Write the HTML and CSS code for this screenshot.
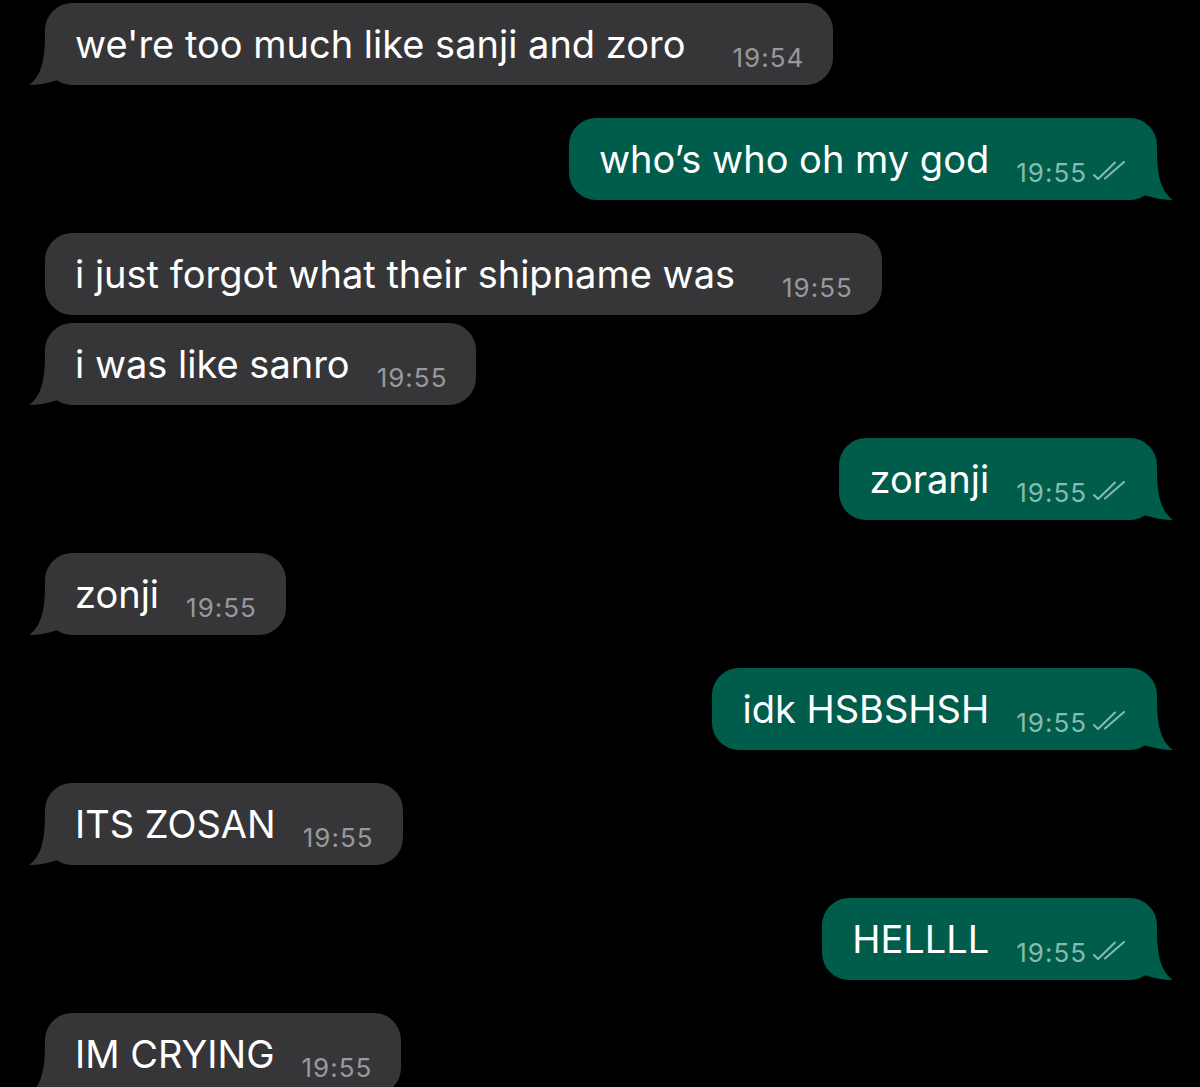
FILE: index.html
```html
<!DOCTYPE html>
<html lang="en">
<head>
    <meta charset="UTF-8">
    <meta name="viewport" content="width=device-width, initial-scale=1.0">
    <title>Chat</title>
    <link rel="stylesheet" href="styles.css">
</head>
<body>

    <div class="chat">

        <div class="row in">
            <div class="bubble">
                <span class="text">we're too much like sanji and zoro</span>
                <span class="time wide">19:54</span>
                <svg class="tail" viewBox="0 0 32 50"><path d="M17,0 C17,28 12,42 1,50 C10,50 21,48 30,45 L32,0 Z"/></svg>
            </div>
        </div>

        <div class="row out">
            <div class="bubble">
                <span class="text">who’s who oh my god</span>
                <span class="time">19:55</span>
                <svg class="ticks" viewBox="0 0 32 19"><path d="M1,14 L5,18 L22,1.5 M12,17.5 L31,1"/></svg>
                <svg class="tail" viewBox="0 0 32 50"><path d="M17,0 C17,28 12,42 1,50 C10,50 21,48 30,45 L32,0 Z"/></svg>
            </div>
        </div>

        <div class="row in grouped">
            <div class="bubble">
                <span class="text">i just forgot what their shipname was</span>
                <span class="time wide">19:55</span>
            </div>
        </div>

        <div class="row in">
            <div class="bubble">
                <span class="text">i was like sanro</span>
                <span class="time">19:55</span>
                <svg class="tail" viewBox="0 0 32 50"><path d="M17,0 C17,28 12,42 1,50 C10,50 21,48 30,45 L32,0 Z"/></svg>
            </div>
        </div>

        <div class="row out">
            <div class="bubble">
                <span class="text">zoranji</span>
                <span class="time">19:55</span>
                <svg class="ticks" viewBox="0 0 32 19"><path d="M1,14 L5,18 L22,1.5 M12,17.5 L31,1"/></svg>
                <svg class="tail" viewBox="0 0 32 50"><path d="M17,0 C17,28 12,42 1,50 C10,50 21,48 30,45 L32,0 Z"/></svg>
            </div>
        </div>

        <div class="row in">
            <div class="bubble">
                <span class="text">zonji</span>
                <span class="time">19:55</span>
                <svg class="tail" viewBox="0 0 32 50"><path d="M17,0 C17,28 12,42 1,50 C10,50 21,48 30,45 L32,0 Z"/></svg>
            </div>
        </div>

        <div class="row out">
            <div class="bubble">
                <span class="text">idk HSBSHSH</span>
                <span class="time">19:55</span>
                <svg class="ticks" viewBox="0 0 32 19"><path d="M1,14 L5,18 L22,1.5 M12,17.5 L31,1"/></svg>
                <svg class="tail" viewBox="0 0 32 50"><path d="M17,0 C17,28 12,42 1,50 C10,50 21,48 30,45 L32,0 Z"/></svg>
            </div>
        </div>

        <div class="row in">
            <div class="bubble">
                <span class="text">ITS ZOSAN</span>
                <span class="time">19:55</span>
                <svg class="tail" viewBox="0 0 32 50"><path d="M17,0 C17,28 12,42 1,50 C10,50 21,48 30,45 L32,0 Z"/></svg>
            </div>
        </div>

        <div class="row out">
            <div class="bubble">
                <span class="text">HELLLL</span>
                <span class="time">19:55</span>
                <svg class="ticks" viewBox="0 0 32 19"><path d="M1,14 L5,18 L22,1.5 M12,17.5 L31,1"/></svg>
                <svg class="tail" viewBox="0 0 32 50"><path d="M17,0 C17,28 12,42 1,50 C10,50 21,48 30,45 L32,0 Z"/></svg>
            </div>
        </div>

        <div class="row in">
            <div class="bubble">
                <span class="text">IM CRYING</span>
                <span class="time">19:55</span>
                <svg class="tail" viewBox="0 0 32 50"><path d="M17,0 C17,28 12,42 1,50 C10,50 21,48 30,45 L32,0 Z"/></svg>
            </div>
        </div>

    </div>

</body>
</html>
```

FILE: styles.css
```css
body { margin: 0; background-color: #000; font-family: Inter, "Liberation Sans", Arial, sans-serif; height: 1087px; overflow: hidden; }
.chat { display: flex; flex-direction: column; gap: 33px; padding-top: 3px; }
.chat .grouped { margin-bottom: -25px; }
.row { display: flex; }
.row.in { justify-content: flex-start; padding-left: 45px; }
.row.out { justify-content: flex-end; padding-right: 43px; }
.bubble { position: relative; isolation: isolate; display: flex; align-items: flex-end; padding: 19px 29px 14px 30px; border-radius: 27px; background-color: #363638; }
.out .bubble { background-color: #005c4b; padding-right: 32px; }
.text { color: #fff; font-size: 38px; line-height: 44px; margin-bottom: 5px; white-space: nowrap; }
.time { color: #98989d; font-size: 26px; line-height: 26px; letter-spacing: 1px; margin-left: 27px; }
.time.wide { margin-left: 47px; }
.out .time { color: #86bcaf; }
.ticks { width: 32px; height: 19px; margin: 0 0 6px 6px; fill: none; stroke: #86bcaf; stroke-width: 2; stroke-linecap: round; stroke-linejoin: round; }
.tail { position: absolute; z-index: -1; bottom: 0; width: 32px; height: 50px; fill: #363638; }
.in .tail { left: -17px; }
.out .tail { right: -17px; transform: scaleX(-1); fill: #005c4b; }
```
